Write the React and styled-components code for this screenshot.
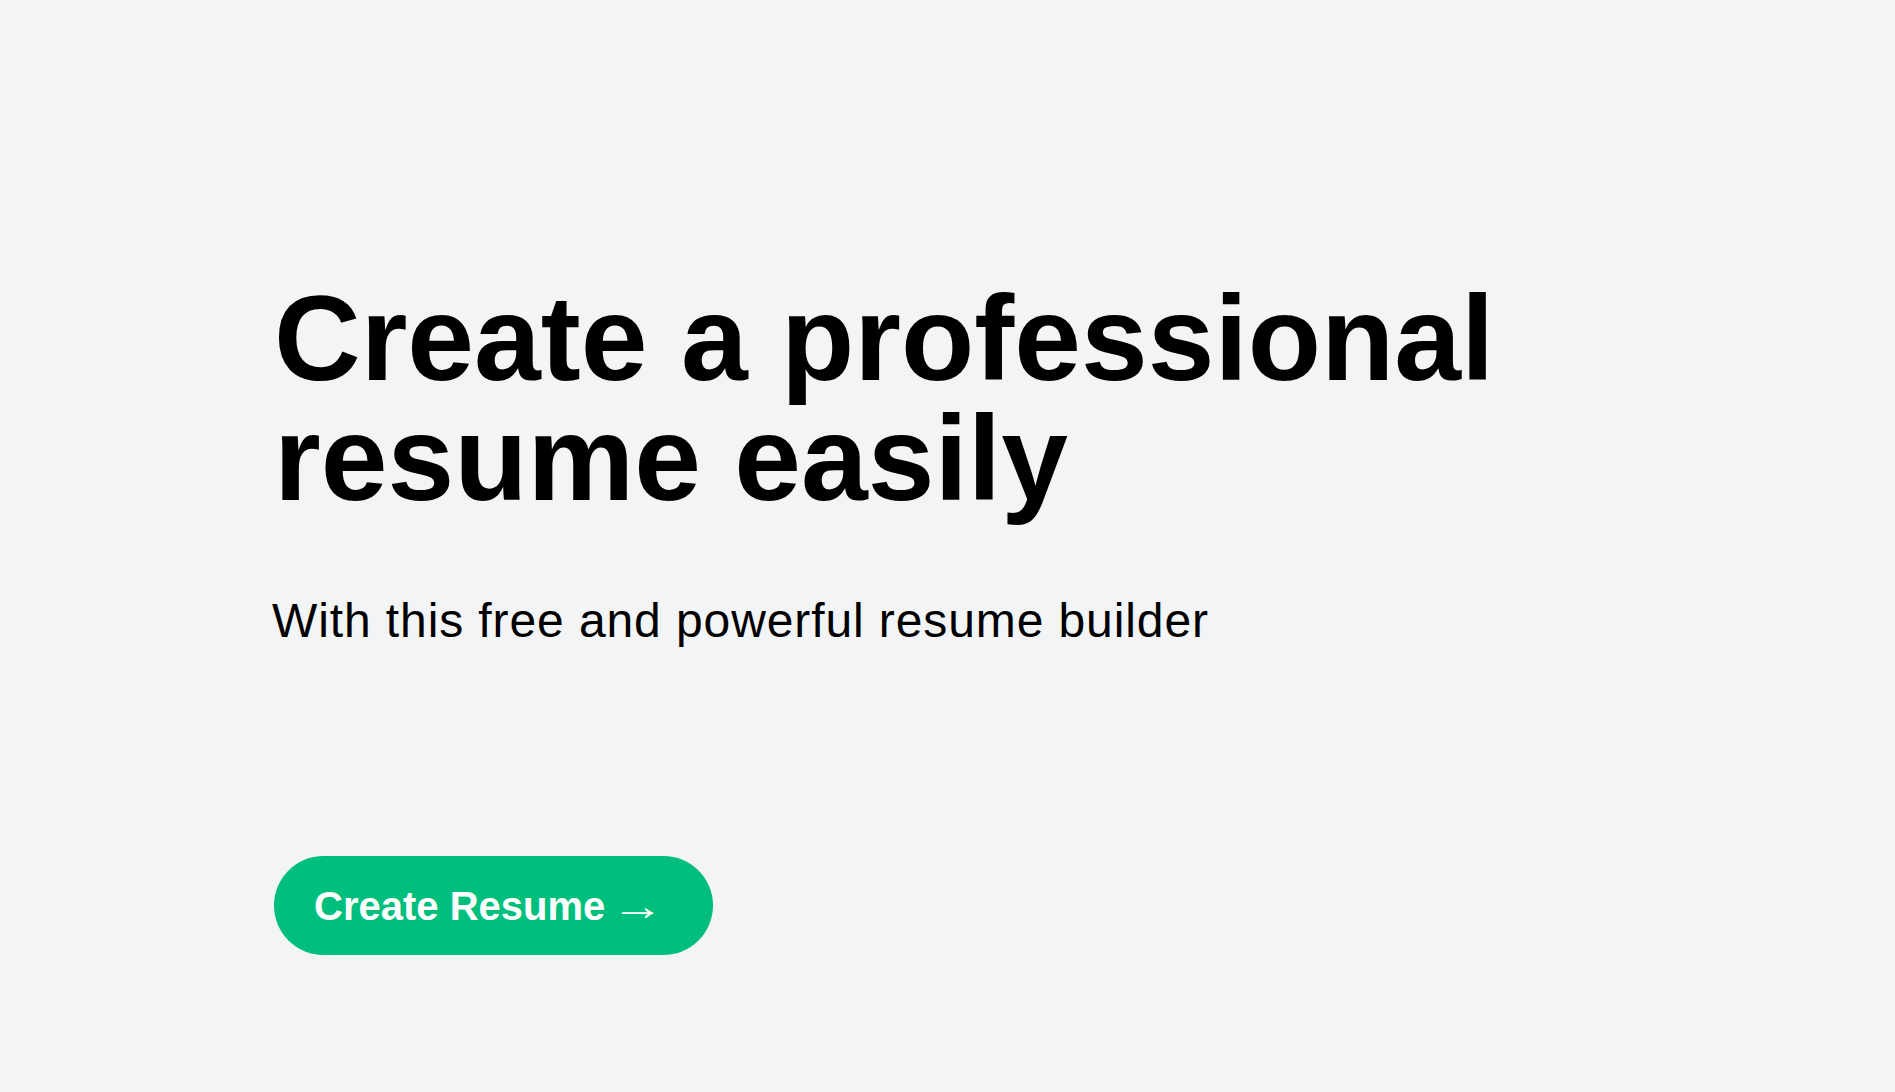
import React from "react";
import styled, { createGlobalStyle } from "styled-components";

const GlobalStyle = createGlobalStyle`
  html, body {
    margin: 0;
    padding: 0;
    background: #f3f4f6;
  }
  body {
    font-family: "Liberation Sans", Arial, sans-serif;
    color: #000;
  }
`;

const Page = styled.main`
  min-height: 1092px;
  box-sizing: border-box;
  padding: 278px 0 0 272px;
  background: #f3f4f6;
`;

const Hero = styled.section`
  display: flex;
  flex-direction: column;
  align-items: flex-start;
`;

const Title = styled.h1`
  margin: 0 0 0 2px;
  font-size: 120px;
  font-weight: 700;
  line-height: 1;
  color: #000;
`;

const Subtitle = styled.p`
  margin: 79px 0 0 0;
  font-size: 48px;
  font-weight: 400;
  line-height: 1;
  letter-spacing: 0.9px;
  color: #000;
`;

const CreateButton = styled.button`
  margin: 211px 0 0 2px;
  padding: 19.5px 62px 19.5px 40px;
  border: none;
  border-radius: 9999px;
  background: #00bf7d;
  color: #fff;
  font-family: "Liberation Sans", Arial, sans-serif;
  font-size: 40px;
  font-weight: 700;
  line-height: 1.5;
  cursor: pointer;
`;

const Arrow = styled.span`
  display: inline-block;
  margin-left: -5px;
  font-weight: 400;
  transform: scaleX(1.32);
  transform-origin: left center;
`;

const App = () => {
  return (
    <Page>
      <GlobalStyle />
      <Hero>
        <Title>
          Create a professional
          <br />
          resume easily
        </Title>
        <Subtitle>With this free and powerful resume builder</Subtitle>
        <CreateButton type="button">
          Create Resume <Arrow>→</Arrow>
        </CreateButton>
      </Hero>
    </Page>
  );
};

export default App;
